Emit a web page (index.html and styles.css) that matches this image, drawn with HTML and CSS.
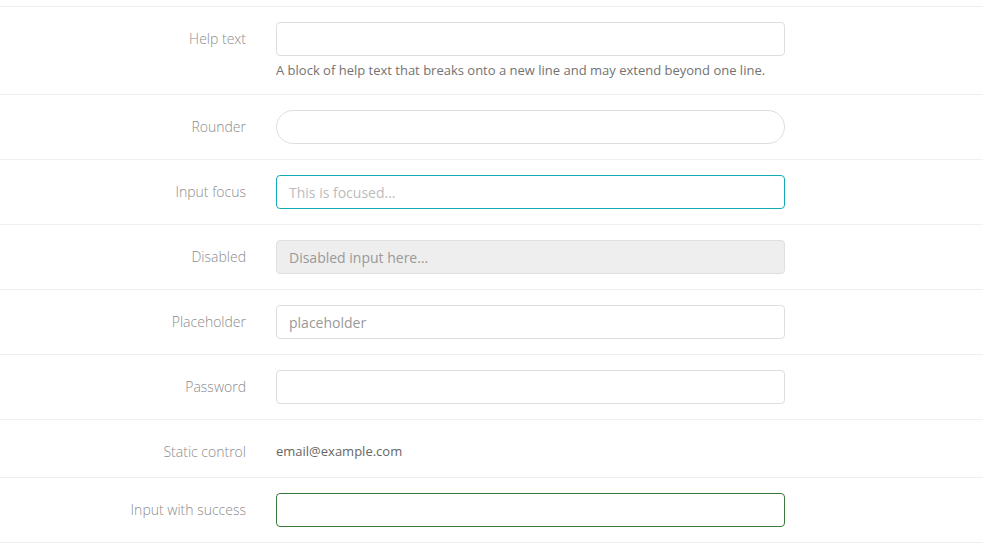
FILE: index.html
```html
<!DOCTYPE html>
<html>
<head>
<meta charset="utf-8">
<link rel="stylesheet" href="styles.css">
</head>
<body>
<div class="top"></div>
<form class="form">
  <div class="row">
    <label class="label">Help text</label>
    <div class="control">
      <input class="input" type="text">
      <p class="help">A block of help text that breaks onto a new line and may extend beyond one line.</p>
    </div>
  </div>
  <div class="row">
    <label class="label">Rounder</label>
    <div class="control"><input class="input rounded" type="text"></div>
  </div>
  <div class="row">
    <label class="label">Input focus</label>
    <div class="control"><input class="input focus" type="text" placeholder="This is focused..."></div>
  </div>
  <div class="row">
    <label class="label">Disabled</label>
    <div class="control"><input class="input" type="text" placeholder="Disabled input here..." disabled></div>
  </div>
  <div class="row">
    <label class="label">Placeholder</label>
    <div class="control"><input class="input ph" type="text" placeholder="placeholder"></div>
  </div>
  <div class="row">
    <label class="label">Password</label>
    <div class="control"><input class="input" type="password"></div>
  </div>
  <div class="row">
    <label class="label">Static control</label>
    <div class="control"><p class="static">email@example.com</p></div>
  </div>
  <div class="row">
    <label class="label">Input with success</label>
    <div class="control"><input class="input success" type="text"></div>
  </div>
</form>
</body>
</html>
```
FILE: styles.css
```css
html, body {
  margin: 0;
  padding: 0;
  background: #fff;
  font-family: "Open Sans", "Noto Sans", sans-serif;
}
.top {
  height: 6px;
  border-bottom: 1px solid #eff0f4;
}
.form {
  margin: 0;
}
.row {
  display: grid;
  grid-template-columns: 246px 509px;
  column-gap: 30px;
  padding: 15px 0;
  border-bottom: 1px solid #eff0f4;
}
.label {
  text-align: right;
  font-size: 14px;
  font-weight: 300;
  line-height: 20px;
  padding-top: 7px;
  color: #8c8c8c;
}
.control {
  display: flex;
  flex-direction: column;
}
.input {
  box-sizing: border-box;
  height: 34px;
  width: 509px;
  margin: 0;
  padding: 6px 12px;
  border: 1px solid #dedede;
  border-radius: 4px;
  font-family: "Open Sans", "Noto Sans", sans-serif;
  font-size: 14px;
  color: #555;
  background: #fff;
  outline: none;
}
.input::placeholder {
  color: #bcbcbc;
  opacity: 1;
}
.rounded {
  border-radius: 17px;
}
.focus {
  border-color: #14aab5;
}
.input:disabled {
  background: #eeeeee;
  border-color: #e0e0e0;
}
.input:disabled::placeholder {
  color: #999;
}
.ph::placeholder {
  color: #999;
}
.success {
  border-color: #3b7a3c;
}
.help {
  margin: 6px 0 0;
  font-size: 13px;
  line-height: 17px;
  color: #737373;
}
.static {
  margin: 0;
  padding: 6px 0 1px;
  font-size: 13px;
  line-height: 20px;
  color: #666;
}
```
